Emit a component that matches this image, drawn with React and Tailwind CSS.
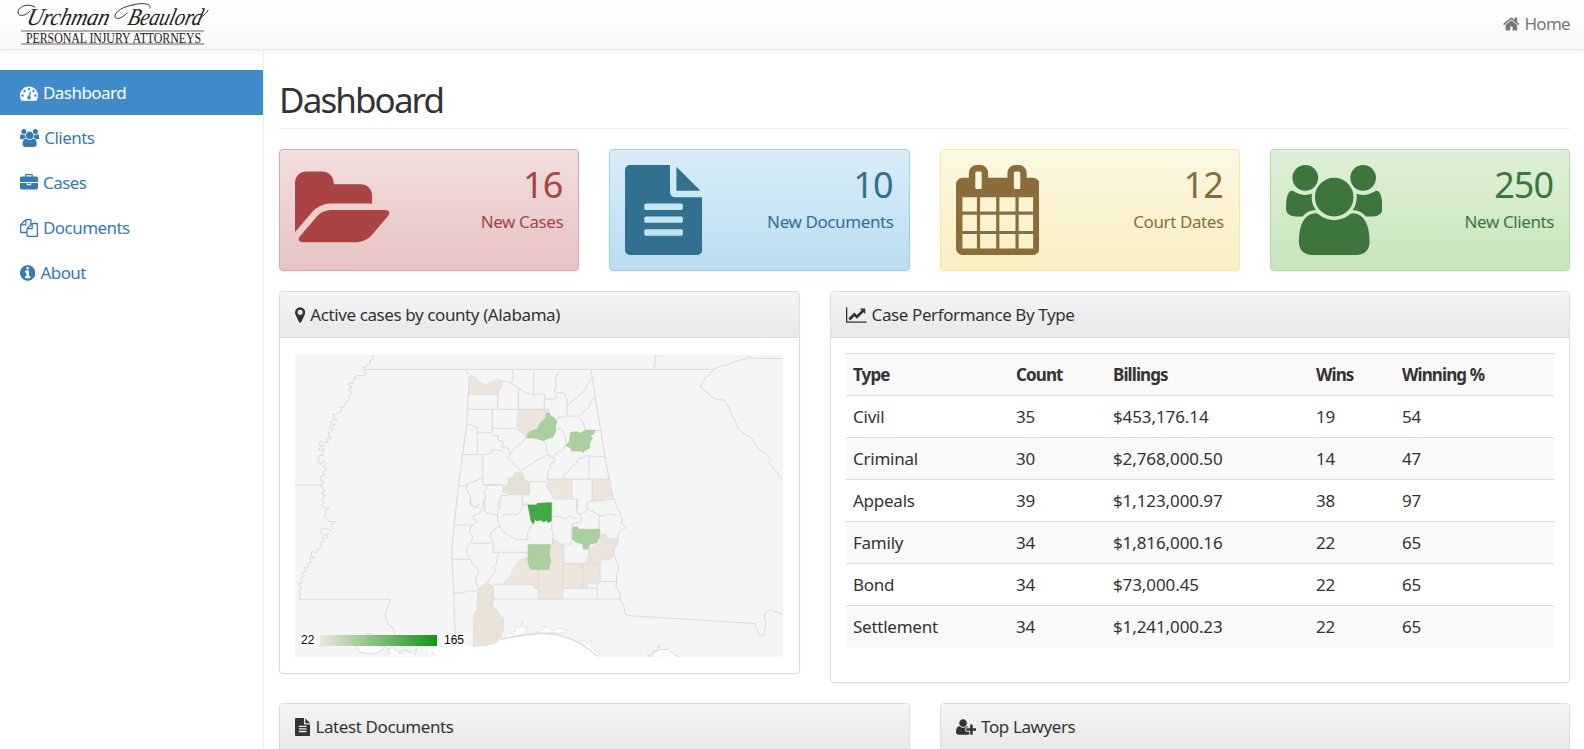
import React from "react";

const ICONS = {
  folder: ["0 0 1920 1792", "M1879 952q0 31-31 66l-336 396q-43 51-120.5 86.5t-143.5 35.5h-1088q-34 0-60.5-13t-26.5-43q0-31 31-66l336-396q43-51 120.5-86.5t143.5-35.5h1088q34 0 60.5 13t26.5 43zm-343-344v160h-832q-94 0-197 47.5t-164 119.5l-337 396-5 6q0-4-.5-12.5t-.5-12.5v-960q0-92 66-158t158-66h320q92 0 158 66t66 158v32h544q92 0 158 66t66 158z"],
  file: ["128 0 1536 1792", "M1596 476q14 14 28 36h-472v-472q22 14 36 28zm-476 164h544v1056q0 40-28 68t-68 28h-1344q-40 0-68-28t-28-68v-1600q0-40 28-68t68-28h800v544q0 40 28 68t68 28zm160 736v-64q0-14-9-23t-23-9h-704q-14 0-23 9t-9 23v64q0 14 9 23t23 9h704q14 0 23-9t9-23zm0-256v-64q0-14-9-23t-23-9h-704q-14 0-23 9t-9 23v64q0 14 9 23t23 9h704q14 0 23-9t9-23zm0-256v-64q0-14-9-23t-23-9h-704q-14 0-23 9t-9 23v64q0 14 9 23t23 9h704q14 0 23-9t9-23z"],
  calendar: ["64 0 1664 1792", "M192 1664h288v-288h-288v288zm352 0h320v-288h-320v288zm-352-352h288v-320h-288v320zm352 0h320v-320h-320v320zm-352-384h288v-288h-288v288zm736 736h320v-288h-320v288zm-384-736h320v-288h-320v288zm768 736h288v-288h-288v288zm-384-352h320v-320h-320v320zm-352-864v-288q0-13-9.5-22.5t-22.5-9.5h-64q-13 0-22.5 9.5t-9.5 22.5v288q0 13 9.5 22.5t22.5 9.5h64q13 0 22.5-9.5t9.5-22.5zm736 864h288v-320h-288v320zm-384-384h320v-288h-320v288zm384 0h288v-288h-288v288zm32-480v-288q0-13-9.5-22.5t-22.5-9.5h-64q-13 0-22.5 9.5t-9.5 22.5v288q0 13 9.5 22.5t22.5 9.5h64q13 0 22.5-9.5t9.5-22.5zm384-64v1280q0 52-38 90t-90 38h-1408q-52 0-90-38t-38-90v-1280q0-52 38-90t90-38h128v-96q0-66 47-113t113-47h64q66 0 113 47t47 113v96h384v-96q0-66 47-113t113-47h64q66 0 113 47t47 113v96h128q52 0 90 38t38 90z"],
  users: ["0 0 1920 1792", "M593 896q-162 5-265 128h-134q-82 0-138-40.5t-56-118.5q0-353 124-353 6 0 43.5 21t97.5 42.5 119 21.5q67 0 133-23-5 37-5 66 0 139 81 256zm1071 637q0 120-73 189.5t-194 69.5h-874q-121 0-194-69.5t-73-189.5q0-53 3.5-103.5t14-109 26.5-108.5 43-97.5 62-81 85.5-53.5 111.5-20q10 0 43 21.5t73 48 107 48 135 21.5 135-21.5 107-48 73-48 43-21.5q61 0 111.5 20t85.5 53.5 62 81 43 97.5 26.5 108.5 14 109 3.5 103.5zm-1024-1277q0 106-75 181t-181 75-181-75-75-181 75-181 181-75 181 75 75 181zm704 384q0 159-112.5 271.5t-271.5 112.5-271.5-112.5-112.5-271.5 112.5-271.5 271.5-112.5 271.5 112.5 112.5 271.5zm576 225q0 78-56 118.5t-138 40.5h-134q-103-123-265-128 81-117 81-256 0-29-5-66 66 23 133 23 59 0 119-21.5t97.5-42.5 43.5-21q124 0 124 353zm-128-609q0 106-75 181t-181 75-181-75-75-181 75-181 181-75 181 75 75 181z"],
  marker: ["384 0 1024 1792", "M1152 640q0-106-75-181t-181-75-181 75-75 181 75 181 181 75 181-75 75-181zm256 0q0 109-33 179l-364 774q-16 33-47.5 52t-67.5 19-67.5-19-46.5-52l-365-774q-33-70-33-179 0-212 150-362t362-150 362 150 150 362z"],
  chart: ["0 0 2048 1792", "M2048 1536v128h-2048v-1536h128v1408h1920zm-128-1248v435q0 21-19.5 29.5t-35.5-7.5l-121-121-633 633q-10 10-23 10t-23-10l-233-233-416 416-192-192 585-585q10-10 23-10t23 10l233 233 464-464-121-121q-16-16-7.5-35.5t29.5-19.5h435q14 0 23 9t9 23z"],
  home: ["64 0 1664 1792", "M1472 992v480q0 26-19 45t-45 19h-384v-384h-256v384h-384q-26 0-45-19t-19-45v-480q0-1 .5-3t.5-3l575-474 575 474q1 2 1 6zm223-69l-62 74q-8 9-21 11h-3q-13 0-21-7l-692-577-692 577q-12 8-24 7-13-2-21-11l-62-74q-8-10-7-23.5t11-21.5l719-599q32-26 76-26t76 26l244 204v-195q0-14 9-23t23-9h192q14 0 23 9t9 23v408l219 182q10 8 11 21.5t-7 23.5z"],
  gauge: ["0 0 1792 1792", "M384 1152q0-53-37.5-90.5t-90.5-37.5-90.5 37.5-37.5 90.5 37.5 90.5 90.5 37.5 90.5-37.5 37.5-90.5zm192-448q0-53-37.5-90.5t-90.5-37.5-90.5 37.5-37.5 90.5 37.5 90.5 90.5 37.5 90.5-37.5 37.5-90.5zm428 481l101-382q6-26-7.5-48.5t-38.5-29.5-48 6.5-30 39.5l-101 382q-60 5-107 43.5t-63 98.5q-20 77 20 146t117 89 146-20 89-117q16-60-6-117t-72-91zm660-33q0-53-37.5-90.5t-90.5-37.5-90.5 37.5-37.5 90.5 37.5 90.5 90.5 37.5 90.5-37.5 37.5-90.5zm-640-640q0-53-37.5-90.5t-90.5-37.5-90.5 37.5-37.5 90.5 37.5 90.5 90.5 37.5 90.5-37.5 37.5-90.5zm448 192q0-53-37.5-90.5t-90.5-37.5-90.5 37.5-37.5 90.5 37.5 90.5 90.5 37.5 90.5-37.5 37.5-90.5zm320 448q0 261-141 483-19 29-54 29h-1402q-35 0-54-29-141-221-141-483 0-182 71-348t191-286 286-191 348-71 348 71 286 191 191 286 71 348z"],
  briefcase: ["0 0 1792 1792", "M640 256h512v-128h-512v128zm1152 640v480q0 66-47 113t-113 47h-1472q-66 0-113-47t-47-113v-480h672v160q0 26 19 45t45 19h320q26 0 45-19t19-45v-160h672zm-768 0v128h-256v-128h256zm768-480v384h-1792v-384q0-66 47-113t113-47h352v-160q0-40 28-68t68-28h576q40 0 68 28t28 68v160h352q66 0 113 47t47 113z"],
  files: ["0 0 1792 1792", "M1696 384q40 0 68 28t28 68v1216q0 40-28 68t-68 28h-960q-40 0-68-28t-28-68v-288h-544q-40 0-68-28t-28-68v-672q0-40 20-88t48-76l408-408q28-28 76-48t88-20h416q40 0 68 28t28 68v328q68-40 128-40h416zm-544 213l-299 299h299v-299zm-640-384l-299 299h299v-299zm196 647l316-316v-416h-384v416q0 40-28 68t-68 28h-416v640h512v-256q0-40 20-88t48-76zm956 804v-1152h-384v416q0 40-28 68t-68 28h-416v640h896z"],
  info: ["128 0 1536 1792", "M1152 1376v-160q0-14-9-23t-23-9h-96v-512q0-14-9-23t-23-9h-320q-14 0-23 9t-9 23v160q0 14 9 23t23 9h96v320h-96q-14 0-23 9t-9 23v160q0 14 9 23t23 9h448q14 0 23-9t9-23zm-128-896v-160q0-14-9-23t-23-9h-192q-14 0-23 9t-9 23v160q0 14 9 23t23 9h192q14 0 23-9t9-23zm640 416q0 209-103 385.5t-279.5 279.5-385.5 103-385.5-103-279.5-279.5-103-385.5 103-385.5 279.5-279.5 385.5-103 385.5 103 279.5 279.5 103 385.5z"],
  userPlus: ["0 0 2048 1792", "M704 896q-159 0-271.5-112.5t-112.5-271.5 112.5-271.5 271.5-112.5 271.5 112.5 112.5 271.5-112.5 271.5-271.5 112.5zm960 128h352q13 0 22.5 9.5t9.5 22.5v192q0 13-9.5 22.5t-22.5 9.5h-352v352q0 13-9.5 22.5t-22.5 9.5h-192q-13 0-22.5-9.5t-9.5-22.5v-352h-352q-13 0-22.5-9.5t-9.5-22.5v-192q0-13 9.5-22.5t22.5-9.5h352v-352q0-13 9.5-22.5t22.5-9.5h192q13 0 22.5 9.5t9.5 22.5v352zm-736 224q0 52 38 90t90 38h256v238q-68 50-171 50h-874q-121 0-194-69t-73-190q0-53 3.5-103.5t14-109 26.5-108.5 43-97.5 62-81 85.5-53.5 111.5-20q19 0 39 17 79 61 154.5 91.5t164.5 30.5 164.5-30.5 154.5-91.5q20-17 39-17 132 0 217 96h-223q-52 0-90 38t-38 90v192z"],
};

function Icon({ name, className = "h-[18px]" }) {
  const [viewBox, d] = ICONS[name];
  return (
    <svg viewBox={viewBox} className={`${className} w-auto shrink-0 fill-current`} aria-hidden="true">
      <path d={d} />
    </svg>
  );
}

function Logo() {
  return (
    <svg viewBox="0 0 210 49" className="ml-[15px] h-[49px] w-[210px] overflow-visible">
      <g fontFamily="'Liberation Serif', serif" fill="#1c1c1c">
        <g fontStyle="italic" fontSize="24" transform="translate(6 0) skewX(-14)">
          <text x="11" y="25" textLength="82" lengthAdjust="spacingAndGlyphs">Urchman</text>
          <text x="112" y="25" textLength="74" lengthAdjust="spacingAndGlyphs">Beaulord</text>
        </g>
        <text x="11" y="43" fontSize="15" textLength="175" lengthAdjust="spacingAndGlyphs">PERSONAL INJURY ATTORNEYS</text>
      </g>
      <g fill="none" stroke="#222" strokeWidth="0.9" strokeLinecap="round">
        <path d="M20 7C11 2 2 8 3 13c1 4 8 3 12-2" />
        <path d="M118 5c-9 1-19 7-18 12 1 3 8 1 12-4" />
        <path d="M118 5c10-3 19-1 17 3" />
        <path d="M184 19c3-2 8-6 9-9" />
      </g>
      <path d="M6 31H189M6 44H189" stroke="#666" strokeWidth="1" />
    </svg>
  );
}

const NAV = [
  ["gauge", "Dashboard"],
  ["users", "Clients"],
  ["briefcase", "Cases"],
  ["files", "Documents"],
  ["info", "About"],
];

const STATS = [
  ["folder", "16", "New Cases", "from-[#f2dede] to-[#e7c3c3] border-[#dca7a7] text-[#a94442]"],
  ["file", "10", "New Documents", "from-[#d9edf7] to-[#b9def0] border-[#9acfea] text-[#31708f]"],
  ["calendar", "12", "Court Dates", "from-[#fcf8e3] to-[#f8efc0] border-[#f5e79e] text-[#8a6d3b]"],
  ["users", "250", "New Clients", "from-[#dff0d8] to-[#c8e5bc] border-[#b2dba1] text-[#3c763d]"],
];

const HEAD = ["Type", "Count", "Billings", "Wins", "Winning %"];
const ROWS = [
  ["Civil", "35", "$453,176.14", "19", "54"],
  ["Criminal", "30", "$2,768,000.50", "14", "47"],
  ["Appeals", "39", "$1,123,000.97", "38", "97"],
  ["Family", "34", "$1,816,000.16", "22", "65"],
  ["Bond", "34", "$73,000.45", "22", "65"],
  ["Settlement", "34", "$1,241,000.23", "22", "65"],
];

function CountyMap() {
  return (
    <svg viewBox="295 355 488 302" className="block h-[302px] w-[488px] bg-[#f5f5f5]">
      <defs>
        <linearGradient id="scale">
          <stop offset="0" stopColor="#efe6dc" />
          <stop offset="1" stopColor="#109618" />
        </linearGradient>
      </defs>
      <g fill="none" stroke="#d9d9d9" strokeWidth="3" strokeLinejoin="round">
        {/* gulf water and bays */}
        <g transform="translate(280 285) scale(.33333)" fill="#fff">
          <path d="M370 1052 395 1046 420 1056 470 1050 490 1040 500 1052 525 1078 560 1080 575 1087 650 1077 662 1065 730 1052 780 1047 830 1050 875 1065 900 1077 930 1097 952 1117H462L460 1100 450 1112 440 1090 425 1070 395 1065Z" stroke="none" />
          <path d="M232 1075 230 1092 245 1103 275 1107 300 1100 315 1086 290 1078 270 1082 250 1070Z" />
          <path d="M258 1048 270 1046 282 1052M315 1112 330 1102 322 1092 338 1088 350 1098 365 1106 378 1097 398 1102 410 1090 405 1112M358 1100 375 1092 390 1108M455 1100 465 1112" />
        </g>
        <g transform="translate(440 500) scale(.33333)" fill="#fff">
          <path d="M192 416 205 400 222 402 228 376 240 385 248 365 250 385 262 378 255 400 232 408Z" strokeWidth="2" />
          <path d="M290 396 315 385 310 378 325 382 340 392 355 384 382 390 375 398 350 400 335 396 310 400Z" strokeWidth="2" />
          <path d="M182 418 250 405 300 400 350 403 395 418 420 430 450 450 472 470" fill="none" strokeWidth="4" />
          <path d="M418 422 430 424 436 418 440 430 455 420 450 436 462 448 482 462 470 466" strokeWidth="2" />
        </g>
        {/* neighbouring states, west */}
        <g transform="translate(280 285) scale(.33333)">
          <path d="M283 210 276 217 279 223 268 227 271 235 260 239 257 248 247 247 253 256 259 265 252 272 243 271 228 273 221 279 229 281 214 290 220 296 206 295 209 304 216 306 205 314 211 322 217 323 208 333 207 344 195 353 197 363 189 368 180 365 187 375 178 382 168 389 158 387 165 398 172 406 158 402 152 414 166 420 149 424 153 434 163 432 151 443 144 440 146 451 154 462 141 457 138 466 146 472 128 473 121 467 117 479 134 482 119 488 117 497 135 491 125 503 132 510 114 513 117 522 112 530 124 538 128 528 139 535 129 545 139 553 128 562 135 570 119 576 124 587 133 591 122 600 127 609 135 617 122 625 136 630 125 642 133 653 124 660 132 669 147 669 136 678 139 687 131 692 143 700 145 709 167 710 153 720 160 731 151 740 144 730 126 730 121 744 132 752 145 745 140 759 126 757 134 768 121 773 125 786 114 791 110 803 95 799 93 814 106 818 89 822 94 832 83 837 86 847 72 847 80 859 66 863 74 873 63 880 69 891 54 898 65 907 57 919 61 930 56 943H332" />
          <path d="M45 600H122M332 943 322 970 315 990 323 1018 340 1030 344 1048M247 253H1300" />
          <path d="M556 253 566 269M568 272 560 420 535 600 515 795 521 920 527 1082" />
        </g>
        {/* neighbouring states, east */}
        <g transform="translate(590 345) scale(.33333)">
          <path d="M3 73 25 215 45 335 57 403 66 445 80 485 92 505 91 515 98 522 94 534 107 548 84 566 83 590 73 610 72 630 85 660 84 680 80 690 78 725 91 748 92 765 102 785 105 805 115 812 497 836V850L502 853 505 870H522L525 850 528 835 524 820 526 802 534 799 540 793 552 798 578 806" />
          <path d="M192 73 197 29M370 73 395 62 415 60 425 53 470 40 474 34 479 39 578 41M370 73 357 90 346 97 341 108 331 123 344 139 354 144 359 151 385 165 402 164 407 173 419 192 425 212 440 237 447 255 465 268 487 282 499 305 524 324 541 343 536 355 546 362 553 376 563 382 568 397 578 404" />
          <path d="M174 932 186 935 190 925 208 914 236 913 252 928 270 937" fill="#fff" />
          <path d="M171 929 182 930 190 918 205 914 202 902 209 909 210 897M200 30H220" />
        </g>
        {/* northern counties */}
        <g transform="translate(440 350) scale(.33333)" strokeWidth="2.9">
          <path d="M218 60V93L210 98M187 93 210 97 222 105 235 113 258 128 282 136M281 60V134M282 136 297 130 304 134 313 130 315 148H337L348 145V128L343 120 349 105 346 90 350 75 358 66M350 128 370 128 374 135 382 150 382 170 380 198 352 203 349 215M382 167 395 156 420 135 435 120 445 100 455 83M380 198H420L425 190 440 178 447 170 455 152 465 143M418 200 425 210 432 225 435 241M465 241H483M174 131 172 178M235 113V180M80 178H328M313 145V178M157 178V234L230 236M83 132H174M78 223 95 223 100 229 112 232V313M112 248H157V233M157 255 175 257 173 270 188 274 188 294H205L209 315M188 302 155 300 153 310 130 314H65M209 315 225 292 240 285 258 262M209 315 202 323 242 362 300 325 328 313 318 300 320 290 315 275M328 313 330 322 343 322 342 335 330 345 333 352 324 364V378L320 388M345 318 350 307 370 300 373 290 388 282M378 285 376 260 363 235 345 238M371 388 373 373 390 360 397 348 407 342 418 324 430 324 435 318 497 320M447 320V388M128 316V404H190M320 388H510M57 407 75 407 95 397 110 392 127 382M82 404 78 417 88 432 92 445 90 464 105 470 120 462M128 404 145 405 132 425 137 445 130 453 138 470 129 480M137 405H190M268 395H320M179 480 183 437H205M247 434V465H264M395 447H412V480M395 388V447M457 388V451M440 480 442 458 457 451" />
          <g strokeWidth="2">
            <path d="M91 76 105 82 120 98 138 105 155 96 163 95 170 88 187 92 184 110 176 122 174 131H86Z" fill="#eee6dd" />
            <path d="M235 180H328L322 190 300 220 285 240 265 248 258 256 240 245 232 235Z" fill="#eee6dd" />
            <path d="M319 190 327 188 333 198 342 203 350 215 346 230 347 245 338 262 320 267 310 273 290 265 258 263 263 252 275 243 290 238 305 215 317 205Z" fill="#accfa1" stroke="#a0c996" />
            <path d="M392 247 412 245 420 250 438 240 465 241 460 253 450 255 458 265 450 275 448 295 435 300 430 308 424 303H395L390 292 376 287 388 275 390 260Z" fill="#accfa1" stroke="#a0c996" />
            <path d="M205 385 222 378 225 368 235 370 240 365 250 375 253 388 268 398V434H205L203 428H190V408L203 404Z" fill="#e3e1d3" />
            <path d="M325 388H395V447H340L335 430 328 425 320 410Z" fill="#eee6dd" />
            <path d="M457 388H510L515 425 522 448 470 451H457Z" fill="#eee6dd" />
          </g>
        </g>
        {/* southern counties */}
        <g transform="translate(440 500) scale(.33333)" strokeWidth="2.9">
          <path d="M45 75H103M38 178H90M43 279 72 279 78 273H110M90 0 97 18 105 25 112 18 125 30 120 40 102 45 97 53 110 62 103 72 95 78 88 95 98 108 94 125 80 145 82 165 93 180 97 192 112 205 117 220 109 232 107 245 113 260M135 0 128 18 137 38 172 45M95 130H150M175 0 173 45V68L183 80M183 50 195 43 235 43 247 25V12H264M176 70 190 95 200 100 225 118H264M183 80 165 85 162 93 152 97V118L160 128V157H264M175 157 168 195 160 200 167 215 148 238 140 249M264 118 263 98 270 85 275 72M160 253H190M335 50 360 50 375 56 390 48 398 50 410 55M335 62V87L340 100 337 132H395L393 92 398 70 425 65 420 45 410 40V0M415 42 430 40 445 28 478 45V88M478 55 483 45 495 48 505 42 530 45M372 135V187M437 190 372 192M480 180V244H528M480 244 472 252V297M368 265H470M160 260V297H540M283 254 285 265H293M336 50V5M443 5 490 0" />
          <g strokeWidth="2">
            <path d="M331 134H338V120L352 122 355 132 368 136V160L372 185 368 205 358 218 350 208 340 220 332 208H325L333 185 328 165Z" fill="#eee6dd" />
            <path d="M190 250 205 236 215 220 222 202 240 180 264 172V185L272 208 295 210 300 225 295 265H285L283 254H190Z" fill="#eee6dd" />
            <path d="M295 210 332 208 340 220 350 208 358 218 368 205V297H295Z" fill="#eee6dd" />
            <path d="M370 193H427V264L420 262 368 264Z" fill="#eee6dd" />
            <path d="M429 193H480V245L472 252 445 250 442 263H429Z" fill="#eee6dd" />
            <path d="M482 104H497L502 115 533 118 533 130 520 145 522 165 510 178 483 180 480 193 437 190 445 165 448 147 470 130 480 122Z" fill="#ece4db" />
            <path d="M113 266 130 255 142 247 152 255 160 258V300L157 318 175 335 180 348 192 355 190 375 192 390 182 402 186 408 165 430 135 437 100 438 102 340 112 328Z" fill="#e9e3d8" />
            <path d="M264 134H331L328 165 333 185 325 208H272L264 185Z" fill="#accfa1" stroke="#a0c996" />
            <path d="M398 82 412 80 415 88H479V110L470 128 450 132 445 147H430L428 132 405 125 398 118Z" fill="#accfa1" stroke="#a0c996" />
            <path d="M264 15H290L292 10 334 8V62L325 68 320 60 312 66 303 60 290 62 285 58 280 72 273 62 270 45Z" fill="#43a943" stroke="#38a13b" />
          </g>
        </g>
      </g>
      <rect x="320" y="635" width="117" height="11" fill="url(#scale)" />
      <g fontFamily="'Liberation Sans', sans-serif" fontSize="12" letterSpacing="0" fill="#000" stroke="#fff" strokeWidth="3" paintOrder="stroke">
        <text x="301" y="644">22</text>
        <text x="444" y="644">165</text>
      </g>
    </svg>
  );
}

function Panel({ icon, title, className = "", children }) {
  return (
    <section className={`rounded-[4px] border border-[#ddd] bg-white shadow-[0_1px_2px_rgba(0,0,0,0.05)] ${className}`}>
      <h2 className="flex h-[46px] items-center gap-[5px] rounded-t-[3px] border-b border-[#ddd] bg-linear-to-b from-[#f5f5f5] to-[#e8e8e8] px-[15px] tracking-[-0.4px]">
        <Icon name={icon} />
        <span>{title}</span>
      </h2>
      {children}
    </section>
  );
}

export default function App() {
  return (
    <div className="flex h-[749px] flex-col overflow-hidden bg-white font-['Noto_Sans',sans-serif] text-[17px] leading-[25px] tracking-[-0.1px] text-[#333]">
      <header className="z-10 flex h-[50px] shrink-0 items-center justify-between border-b border-[#e7e7e7] bg-linear-to-b from-white to-[#f8f8f8] pr-[14px] shadow-[0_1px_5px_rgba(0,0,0,0.075)]">
        <Logo />
        <a className="flex items-center gap-[5px] pb-[2px] tracking-[-0.7px] text-[#777]">
          <Icon name="home" />
          Home
        </a>
      </header>
      <div className="flex min-h-0 flex-1">
        <nav className="w-[264px] shrink-0 border-r border-[#eee] pt-5 tracking-[-0.55px]">
          {NAV.map(([icon, label], i) => (
            <a key={label} className={`flex h-[45px] items-center gap-[5px] pl-5 ${i === 0 ? "bg-[#428bca] text-white" : "text-[#337ab7]"}`}>
              <Icon name={icon} />
              {label}
            </a>
          ))}
        </nav>
        <main className="min-w-0 flex-1 pr-[14px] pl-[15px]">
          <h1 className="mb-5 h-[79px] border-b border-[#eee] pt-[30px] text-[35px] leading-[40px] tracking-[-1.9px]">Dashboard</h1>
          <div className="grid grid-cols-4 gap-[30px]">
            {STATS.map(([icon, value, label, tone]) => (
              <div key={label} className={`flex h-[122px] justify-between rounded-[4px] border bg-linear-to-b p-[15px] shadow-[inset_0_1px_0_rgba(255,255,255,0.25),0_1px_2px_rgba(0,0,0,0.05)] ${tone}`}>
                <Icon name={icon} className="h-[90px]" />
                <div className="text-right">
                  <div className="pr-px text-[36px] leading-[39px] tracking-[-1px]">{value}</div>
                  <div className="mt-[5px] tracking-[-0.4px]">{label}</div>
                </div>
              </div>
            ))}
          </div>
          <div className="mt-5 flex items-start gap-[30px]">
            <Panel icon="marker" title="Active cases by county (Alabama)" className="h-[383px] w-[521px] shrink-0">
              <div className="px-[15px] pt-[17px]">
                <CountyMap />
              </div>
            </Panel>
            <Panel icon="chart" title="Case Performance By Type" className="h-[392px] flex-1">
              <div className="px-[15px] pt-[15px]">
                <table className="w-full table-fixed text-left">
                  <colgroup>
                    <col className="w-[163px]" />
                    <col className="w-[97px]" />
                    <col className="w-[203px]" />
                    <col className="w-[86px]" />
                    <col />
                  </colgroup>
                  <thead>
                    <tr className="h-[42px] border-t border-[#ddd] bg-[#f9f9f9]">
                      {HEAD.map((h) => (
                        <th key={h} className="px-[7px] py-0 font-bold tracking-[-0.9px]">{h}</th>
                      ))}
                    </tr>
                  </thead>
                  <tbody>
                    {ROWS.map((row) => (
                      <tr key={row[0]} className="h-[42px] border-t border-[#ddd] even:bg-[#f9f9f9]">
                        {row.map((cell, i) => (
                          <td key={i} className="px-[7px] py-0 first:tracking-[-0.25px]">{cell}</td>
                        ))}
                      </tr>
                    ))}
                  </tbody>
                </table>
              </div>
            </Panel>
          </div>
          <div className="mt-5 grid grid-cols-2 gap-[30px]">
            <Panel icon="file" title="Latest Documents" className="h-[200px]" />
            <Panel icon="userPlus" title="Top Lawyers" className="h-[200px]" />
          </div>
        </main>
      </div>
    </div>
  );
}
